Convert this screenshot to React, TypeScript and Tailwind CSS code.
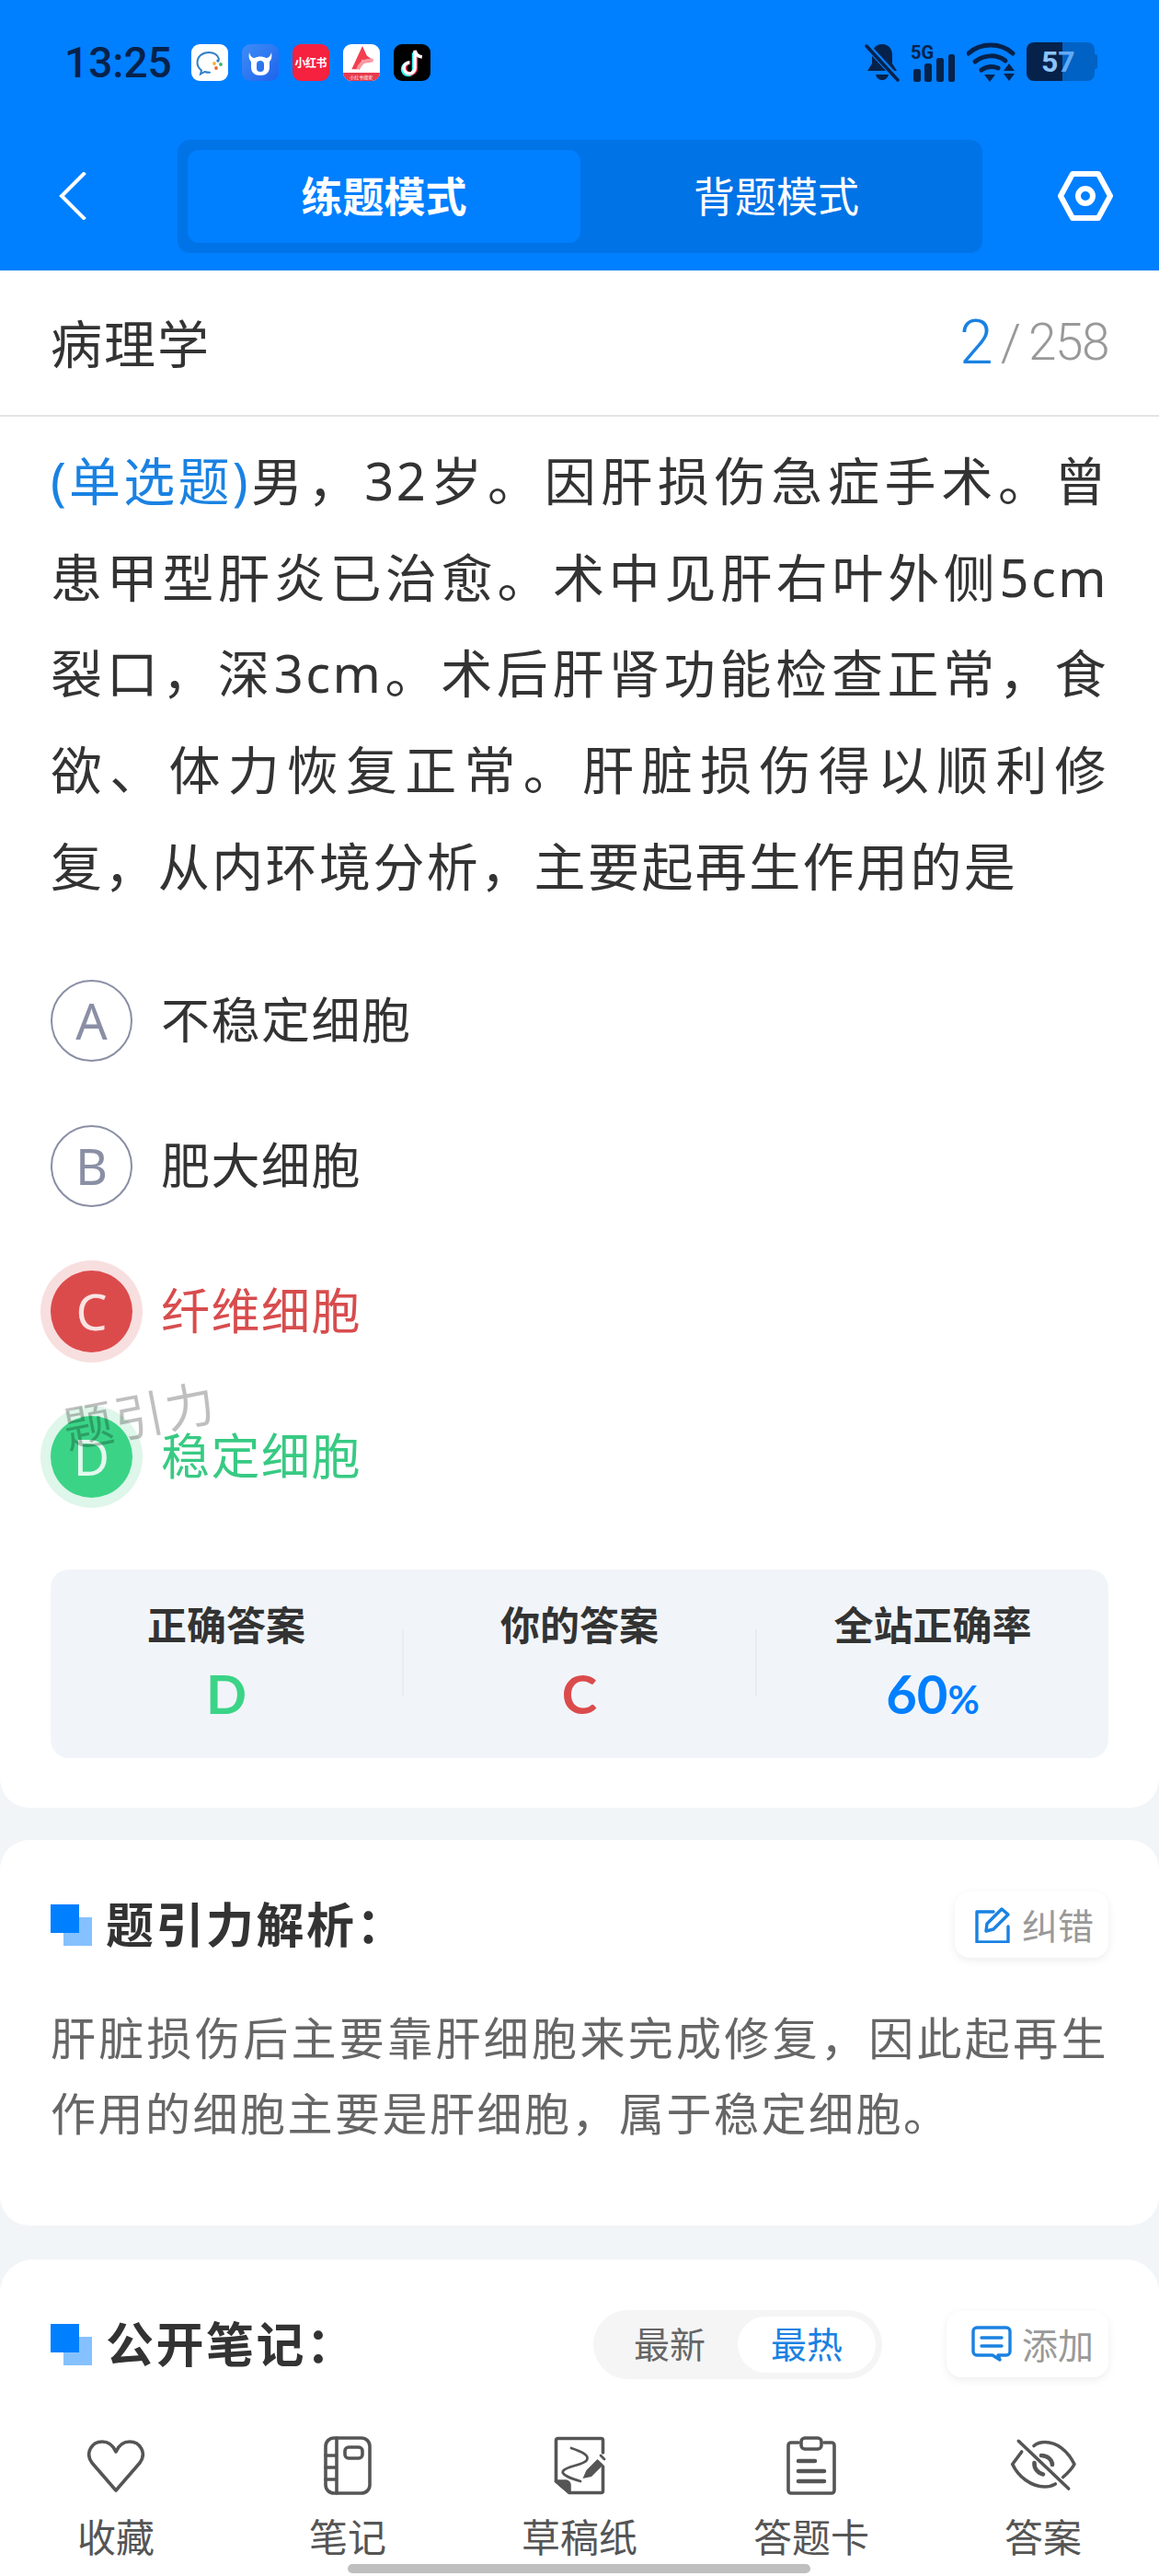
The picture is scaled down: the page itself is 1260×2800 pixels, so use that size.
import React from "react";

const cjk = "font-['Noto_Sans','Noto_Sans_CJK_SC',sans-serif]";

function StatusIcons() {
  return (
    <div className="flex items-center gap-[15px]">
      <div className="w-10 h-10 rounded-[9px] bg-white">
        <svg width="40" height="40" viewBox="0 0 40 40" fill="none">
          <path d="M19 9C12 9 6.500 13.500 6.500 20c0 3.500 2 6.500 4.500 8.500l-1 4 4.500-2.500c1.800.6 3.500.8 5.500.8" stroke="#2f7fc9" strokeWidth="2" strokeLinecap="round" />
          <path d="M19 9c5 0 9.500 2.500 11 7" stroke="#2f7fc9" strokeWidth="2" strokeLinecap="round" />
          <circle cx="25" cy="21" r="1.900" fill="#f2b233" />
          <circle cx="29" cy="18" r="1.700" fill="#2f7fc9" />
          <circle cx="32" cy="22" r="1.900" fill="#3bb26b" />
          <circle cx="27" cy="26" r="1.900" fill="#e8683a" />
        </svg>
      </div>
      <div className="w-10 h-10 rounded-[9px] bg-linear-to-br from-[#3f8cf6] to-[#1f63ec]">
        <svg width="40" height="40" viewBox="0 0 40 40" fill="#fff" fillRule="evenodd">
          <path d="M8 9C9 13 11 15 14 15C17 13 23 13 26 15C29 15 31 13 32 9C33 14 32 17 30 19V25C30 31 26 34 20 34C14 34 10 31 10 25V19C8 17 7 14 8 9zM20 18C17.500 18 16 19 16 22V26C16 29 17.500 30 20 30C22.500 30 24 29 24 26V22C24 19 22.500 18 20 18z" />
        </svg>
      </div>
      <div className="w-10 h-10 rounded-[9px] bg-[#f5213f] flex items-center justify-center text-white text-[12px] font-bold font-['Noto_Sans_CJK_SC',sans-serif] whitespace-nowrap tracking-[-0.5px]">
        小红书
      </div>
      <div className="w-10 h-10 rounded-[9px] bg-white overflow-hidden flex flex-col items-center relative">
        <svg width="40" height="32" viewBox="0 0 40 32" fill="none">
          <path d="M21 2 L9 28 L16 28 L21 17 C24 22 27 22 33 18 L26 13 Z" fill="#f33e4f" />
          <path d="M16 28 C20 19 25 18 33 18" stroke="#fa98a2" strokeWidth="4" />
        </svg>
        <div className="w-full h-[9px] bg-[#e83a4c] text-white text-[5px] leading-[9px] text-center whitespace-nowrap font-['Noto_Sans_CJK_SC',sans-serif]">
          小红书搜索
        </div>
      </div>
      <div className="w-10 h-10 rounded-[9px] bg-black flex items-center justify-center">
        <svg width="36" height="36" viewBox="0 0 30 30" fill="none">
          <path d="M17.500 5v15a5 5 0 1 1-5-5" stroke="#25f4ee" strokeWidth="3.400" transform="translate(-1 1)" />
          <path d="M17.500 5v15a5 5 0 1 1-5-5" stroke="#fe2c55" strokeWidth="3.400" transform="translate(1 0)" />
          <path d="M17.500 5v15a5 5 0 1 1-5-5" stroke="#fff" strokeWidth="3" />
          <path d="M17.500 4c.5 3.500 3 5.500 6.500 6" stroke="#fff" strokeWidth="3" />
        </svg>
      </div>
    </div>
  );
}

function StatusRight() {
  const dark = "#06224a";
  return (
    <div className="flex items-center gap-[11px] -mt-[3px]">
      <svg width="40" height="44" viewBox="0 0 40 44" fill="none">
        <path d="M20 3c-7 0-11 5-11 12v9l-5 8h32l-5-8v-9c0-7-4-12-11-12z" fill={dark} />
        <path d="M13 36h14c-1 4-4 6-7 6s-6-2-7-6z" fill={dark} />
        <path d="M2 3l35 38" stroke="#007fff" strokeWidth="7" />
        <path d="M3 5l34 37" stroke={dark} strokeWidth="3.500" strokeLinecap="round" />
      </svg>
      <div className="relative w-[50px] h-[44px]">
        <div className="absolute left-0 top-[1px] text-[20px] leading-[22px] font-bold text-[#06224a] font-['Roboto',sans-serif]">5G</div>
        <svg className="absolute left-0 top-0" width="50" height="44" viewBox="0 0 50 44" fill={dark}>
          <rect x="3" y="30" width="8" height="14" rx="2.500" />
          <rect x="15" y="24" width="8" height="20" rx="2.500" />
          <rect x="28" y="18" width="8" height="26" rx="2.500" />
          <rect x="41" y="14" width="7" height="30" rx="2.500" />
        </svg>
      </div>
      <svg width="54" height="44" viewBox="0 0 54 44" fill="none" stroke={dark} strokeWidth="5" strokeLinecap="round">
        <path d="M2 13C15 1 37 1 50 13" />
        <path d="M9 22c10-8 24-8 33-1" />
        <path d="M16 31c6-4 13-4 18-2" />
        <path d="M19 36h12l-6 8z" fill={dark} stroke="none" />
        <path d="M46 24l6 8H40z" fill={dark} stroke="none" />
        <path d="M40 35h12l-6 8z" fill={dark} stroke="none" />
      </svg>
      <div className="relative w-[77px] h-[42px] flex">
        <div className="w-[39px] h-[42px] bg-[#06224a] rounded-l-[8px]" />
        <div className="w-[35px] h-[42px] bg-[#0062c4] rounded-r-[8px]" />
        <div className="w-[3px] h-[16px] mt-[13px] bg-[#0062c4] rounded-r-[2px]" />
        <div className="absolute left-[16px] top-0 text-[32px] leading-[42px] font-bold font-['Roboto',sans-serif]">
          <span className="text-[#8cc4fb]">5</span>
          <span className="text-[#62aaf7]">7</span>
        </div>
      </div>
    </div>
  );
}

function Header() {
  return (
    <header className="bg-[#007fff] h-[294px] shrink-0 flex flex-col">
      <div className="h-[152px] shrink-0 pl-[70px] pr-[67px] pt-[48px] flex items-start justify-between">
        <div className="flex items-center h-10 gap-[21px]">
          <span className="text-[46px] leading-10 font-medium text-[#06224a] font-['Roboto',sans-serif]">13:25</span>
          <StatusIcons />
        </div>
        <StatusRight />
      </div>
      <div className="flex items-start pl-[64px] pr-[50px]">
        <svg className="mt-[35px]" width="30" height="52" viewBox="0 0 30 52" fill="none">
          <path d="M27 2 3 26l24 24" stroke="#fff" strokeWidth="4" strokeLinecap="square" />
        </svg>
        <div className="ml-[99px] w-[875px] h-[123px] rounded-[14px] bg-[#0073e6] p-[11px] flex">
          <div className={`w-[427px] h-[101px] rounded-[12px] bg-[#007fff] flex items-center justify-center text-white text-[45px] font-bold ${cjk}`}>
            练题模式
          </div>
          <div className={`flex-1 flex items-center justify-center text-white text-[45px] ${cjk}`}>
            背题模式
          </div>
        </div>
        <svg className="ml-[82px] mt-[34px]" width="60" height="54" viewBox="0 0 60 54" fill="none" stroke="#fff" strokeWidth="6">
          <path d="M16 3h28l13 24-13 24H16L3 27z" strokeLinejoin="round" />
          <circle cx="30" cy="27" r="8" />
        </svg>
      </div>
    </header>
  );
}

const questionLines = [
  <>
    <span className="text-[#1a82e2] tracking-normal">(单选题)</span>男，32岁。因肝损伤急症手术。曾
  </>,
  "患甲型肝炎已治愈。术中见肝右叶外侧5cm",
  "裂口，深3cm。术后肝肾功能检查正常，食",
  "欲、体力恢复正常。肝脏损伤得以顺利修",
];

function Option({ letter, text, state }: { letter: string; text: string; state?: "wrong" | "right" }) {
  const circle =
    state === "wrong"
      ? "bg-[#dc4b4c] text-[#fbe3e3] shadow-[0_0_0_11px_#f8dfdf]"
      : state === "right"
        ? "bg-[#3bd487] text-[#e3f9ee] shadow-[0_0_0_11px_#dff6ea]"
        : "border-2 border-[#8a8fa5] text-[#8a8fa5]";
  const label = state === "wrong" ? "text-[#d84c4d]" : state === "right" ? "text-[#38ca83]" : "text-[#333333]";
  return (
    <div className="h-[158px] flex items-center">
      <div className={`w-[89px] h-[89px] rounded-full flex items-center justify-center text-[54px] font-['Noto_Sans',sans-serif] ${circle}`}>
        {letter}
      </div>
      <div className={`ml-[31px] pb-[1px] text-[53px] tracking-[1.500px] ${label} ${cjk}`}>{text}</div>
    </div>
  );
}

function Stat({ title, children }: { title: string; children: React.ReactNode }) {
  return (
    <div className="flex-1 flex flex-col items-center">
      <div className={`text-[43px] leading-[50px] font-bold text-[#333333] ${cjk}`}>{title}</div>
      <div className="mt-[17px] h-[64px] flex items-center justify-center font-bold text-[58px] font-['Lato',sans-serif]">{children}</div>
    </div>
  );
}

function QuestionCard() {
  return (
    <section className="bg-white rounded-b-[32px] h-[1671px] shrink-0 flex flex-col">
      <div className="h-[159px] shrink-0 border-b-2 border-[#e3e4e6] pl-[55px] pr-[55px] flex items-center justify-between">
        <div className={`text-[56px] tracking-[2px] text-[#333333] ${cjk}`}>病理学</div>
        <div className="flex items-center font-['Roboto',sans-serif] font-light text-[#999999]">
          <span className="text-[#1a82e2] text-[66px] leading-none">2</span>
          <span className="text-[56px] ml-[8px] leading-none">/</span>
          <span className="text-[55px] ml-[8px] leading-none tracking-[-1.500px]">258</span>
        </div>
      </div>
      <div className={`px-[55px] pt-[17px] text-[56px] leading-[104.7px] text-[#333333] tracking-[2.400px] ${cjk}`}>
        {questionLines.map((l, i) => (
          <div key={i} className="whitespace-nowrap [text-align:justify] [text-align-last:justify]">
            {l}
          </div>
        ))}
        <div className="whitespace-nowrap">复，从内环境分析，主要起再生作用的是</div>
      </div>
      <div className="px-[55px] mt-[37px]">
        <Option letter="A" text="不稳定细胞" />
        <Option letter="B" text="肥大细胞" />
        <Option letter="C" text="纤维细胞" state="wrong" />
        <Option letter="D" text="稳定细胞" state="right" />
        <div className="relative -mt-[158px] h-[158px] pointer-events-none">
          <div className={`absolute left-[13px] top-[3px] text-[54px] leading-[60px] tracking-[2px] text-black/25 -rotate-[11deg] whitespace-nowrap ${cjk}`}>
            题引力
          </div>
        </div>
        <div className="mt-[43px] h-[205px] rounded-[20px] bg-[#f1f5f9] flex items-start pt-[36px]">
          <Stat title="正确答案">
            <span className="text-[#3bd487]">D</span>
          </Stat>
          <div className="w-[2px] h-[73px] mt-[29px] bg-[#e9edf1]" />
          <Stat title="你的答案">
            <span className="text-[#db4b4c]">C</span>
          </Stat>
          <div className="w-[2px] h-[73px] mt-[29px] bg-[#e9edf1]" />
          <Stat title="全站正确率">
            <span className="text-[#007fff]">
              60<span className="text-[42px]">%</span>
            </span>
          </Stat>
        </div>
      </div>
    </section>
  );
}

function Squares() {
  return (
    <div className="w-[45px] h-[45px] shrink-0 bg-[linear-gradient(#85c1ff,#85c1ff)] bg-[length:31px_31px] bg-[position:14px_14px] bg-no-repeat">
      <div className="w-[31px] h-[31px] bg-[#007fff]" />
    </div>
  );
}

function SectionTitle({ children }: { children: string }) {
  return (
    <div className="flex items-center">
      <Squares />
      <div className={`ml-[15px] text-[52px] leading-[72px] tracking-[2.500px] font-bold text-[#333333] ${cjk}`}>{children}</div>
    </div>
  );
}

function PillButton({ icon, label, w }: { icon: React.ReactNode; label: string; w: string }) {
  return (
    <div className={`${w} h-[72px] rounded-[16px] bg-white shadow-[0_3px_10px_rgba(0,0,0,0.07)] flex items-center justify-end pr-[16px] gap-[11px]`}>
      {icon}
      <span className={`text-[39px] leading-none text-[#999999] ${cjk}`}>{label}</span>
    </div>
  );
}

function AnalysisCard() {
  return (
    <section className="mt-[35px] bg-white rounded-[32px] h-[419px] shrink-0 pt-[56px] px-[55px]">
      <div className="flex items-center justify-between h-[72px]">
        <SectionTitle>题引力解析：</SectionTitle>
        <PillButton
          w="w-[167px]"
          label="纠错"
          icon={
            <svg width="40" height="40" viewBox="0 0 40 40" fill="none" stroke="#1a82e2" strokeWidth="3.400" strokeLinejoin="round" strokeLinecap="round">
              <path d="M20 6H2v33h34V22" />
              <path d="M13 19 29 3l7 6-16 16-8 2z" />
            </svg>
          }
        />
      </div>
      <div className={`mt-[46px] text-[49px] leading-[82px] tracking-[2.500px] text-[#666666] ${cjk}`}>
        <div className="whitespace-nowrap [text-align-last:justify]">肝脏损伤后主要靠肝细胞来完成修复，因此起再生</div>
        <div className="whitespace-nowrap">作用的细胞主要是肝细胞，属于稳定细胞。</div>
      </div>
    </section>
  );
}

function NotesCard() {
  return (
    <section className="mt-[37px] bg-white rounded-t-[36px] flex-1 min-h-0 pt-[55px] px-[55px]">
      <div className="flex items-center justify-between h-[74px]">
        <SectionTitle>公开笔记：</SectionTitle>
        <div className="flex items-center gap-[70px]">
          <div className={`w-[314px] h-[75px] rounded-full bg-[#f5f5f5] flex items-center pl-[44px] pr-[7px] justify-between text-[39px] ${cjk}`}>
            <span className="text-[#666666]">最新</span>
            <span className="w-[150px] h-[61px] rounded-full bg-white text-[#1a82e2] flex items-center justify-center">最热</span>
          </div>
          <PillButton
            w="w-[176px]"
            label="添加"
            icon={
              <svg width="44" height="40" viewBox="0 0 44 40" fill="none" stroke="#1a82e2" strokeWidth="3.400" strokeLinecap="round" strokeLinejoin="round">
                <path d="M6 2h32a4 4 0 0 1 4 4v22a4 4 0 0 1-4 4H30l-1 0 2 5-8-5H6a4 4 0 0 1-4-4V6a4 4 0 0 1 4-4z" />
                <path d="M11 13h22M11 22h22" />
              </svg>
            }
          />
        </div>
      </div>
    </section>
  );
}

const stroke = { fill: "none", stroke: "#555555", strokeWidth: 3.6, strokeLinecap: "round" as const, strokeLinejoin: "round" as const };

const navItems: { label: string; icon: React.ReactNode }[] = [
  {
    label: "收藏",
    icon: (
      <svg width="66" height="60" viewBox="0 0 66 60" {...stroke}>
        <path d="M33 57 7 27C-1 16 7 4 18 4c7 0 12 4 15 11 3-7 8-11 15-11 11 0 19 12 11 23z" />
      </svg>
    ),
  },
  {
    label: "笔记",
    icon: (
      <svg width="52" height="64" viewBox="0 0 52 64" {...stroke}>
        <rect x="2" y="2" width="48" height="60" rx="9" />
        <path d="M14 2v60M2 21h12M2 34h12M2 47h12" />
        <rect x="23" y="12" width="19" height="12" rx="4" />
      </svg>
    ),
  },
  {
    label: "草稿纸",
    icon: (
      <svg width="58" height="65" viewBox="0 1 58 65" {...stroke}>
        <path d="M54.500 19V5.500a2 2 0 0 0-2-2H5.500a2 2 0 0 0-2 2V50L18 62.500H52.500a2 2 0 0 0 2-2V34" />
        <path d="M3.500 50H14a4 4 0 0 1 4 4V62.500z" fill="#555555" />
        <path d="M20 14C32 18 40 22 37 27C33 33 15 33 11 39C9 43 20 47 30 50" strokeWidth="2.800" />
        <path d="M36.500 38 48.500 26 55 32 42 45 32.500 47z" fill="#555555" stroke="none" />
        <path d="M52 22 56 26" strokeWidth="2.800" />
      </svg>
    ),
  },
  {
    label: "答题卡",
    icon: (
      <svg width="56" height="64" viewBox="0 0 56 64" {...stroke}>
        <path d="M14 7H6a3 3 0 0 0-3 3v49a3 3 0 0 0 3 3h44a3 3 0 0 0 3-3V10a3 3 0 0 0-3-3h-8" />
        <rect x="17" y="2" width="22" height="12" rx="4" />
        <path d="M14 27h18M14 38h28M14 49h28" strokeWidth="4.500" />
      </svg>
    ),
  },
  {
    label: "答案",
    icon: (
      <svg width="74" height="60" viewBox="0 0 74 60" {...stroke}>
        <path d="M27 8.500C31 5 35 4.500 39 4.500C52 4.500 64 14 71 28.500C68 34 64 38 58.700 42.500" />
        <path d="M13.700 15 3.700 28.500C10 42 24 53 38.700 53C43 53 47 52 50.300 50" />
        <path d="M10.300 3.300 64.700 55" />
        <path d="M35 19C42 19 47 24 47 29" strokeWidth="4.600" />
        <path d="M27.500 27C27 33 31 38 37 39.500" strokeWidth="4.600" />
      </svg>
    ),
  },
];

function BottomNav() {
  return (
    <nav className="h-[185px] shrink-0 bg-white grid grid-cols-5 relative">
      {navItems.map((n) => (
        <div key={n.label} className="flex flex-col items-center">
          <div className="h-[64px] mt-[33px] flex items-center justify-center">{n.icon}</div>
          <div className={`mt-[16px] text-[42px] leading-[60px] text-[#555555] ${cjk}`}>{n.label}</div>
        </div>
      ))}
      <div className="absolute left-[378px] bottom-[3px] w-[503px] h-[10px] rounded-full bg-[#bfbfbf]" />
    </nav>
  );
}

export default function App() {
  return (
    <div className="w-[1260px] h-[2800px] overflow-hidden bg-[#f2f5f8] flex flex-col">
      <Header />
      <QuestionCard />
      <AnalysisCard />
      <NotesCard />
      <BottomNav />
    </div>
  );
}
